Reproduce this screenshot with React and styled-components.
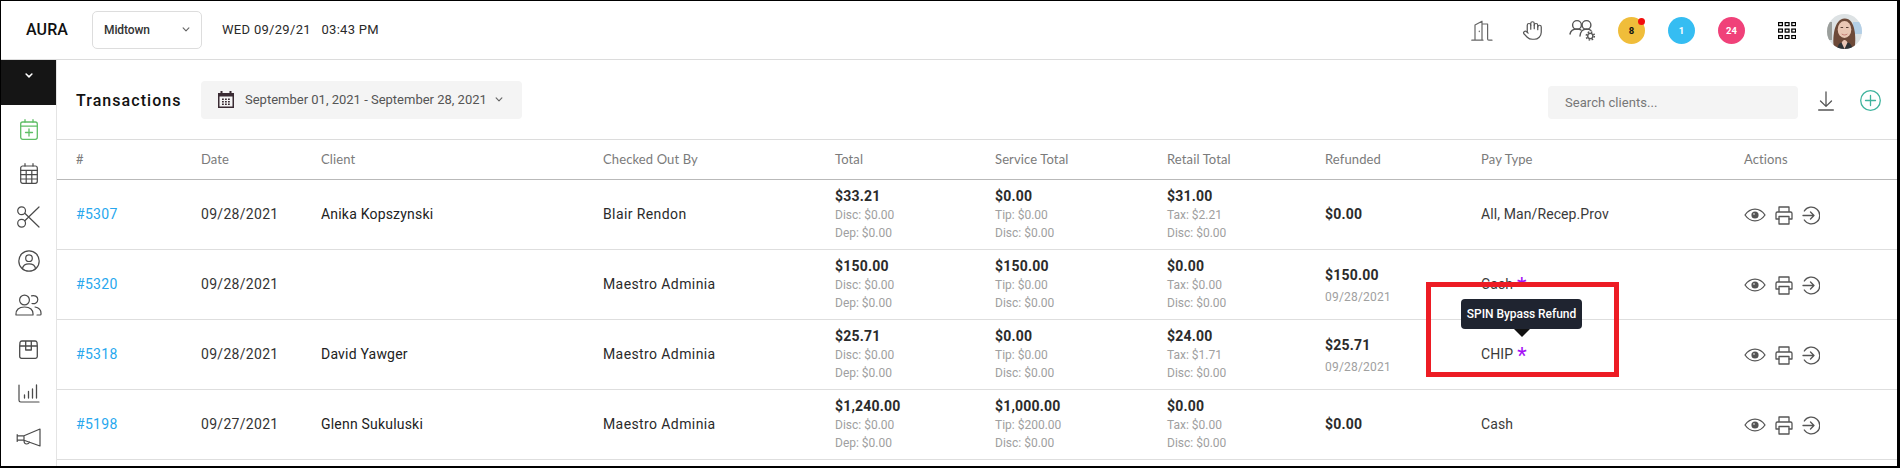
import React from "react";
import styled, { createGlobalStyle } from "styled-components";
import { Hand } from "lucide-react";

const Global = createGlobalStyle`
  html, body { margin: 0; padding: 0; background: #000; }
  body { font-family: Roboto, "Liberation Sans", sans-serif; }
  * { box-sizing: border-box; }
`;

const Frame = styled.div`
  width: 1900px; height: 468px; background: #fff; overflow: hidden;
  border-style: solid; border-color: #000; border-width: 1px 3px 2px 1px;
  display: flex; flex-direction: column;
`;
const TopBar = styled.header`
  height: 59px; flex: none; display: flex; align-items: center;
  border-bottom: 1px solid #dcdcdc; padding-left: 25px; padding-right: 35px;
`;
const Brand = styled.div`font-size: 16px; font-weight: 500; color: #111; width: 66px; letter-spacing: .1px; margin-top: -1px;`;
const LocationSelect = styled.div`
  width: 110px; height: 38px; border: 1px solid #ddd; border-radius: 5px; margin-top: -1px;
  display: flex; align-items: center; justify-content: space-between;
  padding: 0 11px 0 11px; font-size: 12px; color: #333; font-weight: 500; margin-right: 20px; letter-spacing: -.1px;
`;
const Clock = styled.div`font-size: 13px; color: #2a2a2a; letter-spacing: .3px; white-space: pre; margin-top: -1px; font-weight: 400;`;
const TopRight = styled.div`margin-left: auto; display: flex; align-items: center;`;
const Slot = styled.div`width: ${p => p.$w || 50}px; display: flex; justify-content: center; align-items: center; position: relative;`;
const Badge = styled.div`
  width: 27px; height: 27px; border-radius: 50%; background: ${p => p.$bg}; color: ${p => p.$fg};
  display: flex; align-items: center; justify-content: center; font-size: 9.5px; font-weight: 700; position: relative;
  margin-left: -1px;
`;
const Dot = styled.span`position: absolute; width: 7px; height: 7px; border-radius: 50%; background: #f20d0d; top: 1px; right: 0px;`;
const Avatar = styled.div`width: 35px; height: 35px; border-radius: 50%; overflow: hidden; margin-left: 10px; margin-top: 2px;`;

const Body = styled.div`flex: 1; display: flex; min-height: 0;`;
const Sidebar = styled.aside`width: 56px; flex: none; border-right: 1px solid #e4e4e4; display: flex; flex-direction: column; align-items: stretch;`;
const Toggle = styled.div`
  height: 45px; background: #151515; display: flex; justify-content: center; padding-top: 13px;
`;
const NavList = styled.nav`padding-top: 2px; display: flex; flex-direction: column;`;
const NavItem = styled.div`height: 44px; display: flex; align-items: center; justify-content: center;`;

const Main = styled.main`flex: 1; min-width: 0; display: flex; flex-direction: column;`;
const Toolbar = styled.div`
  height: 80px; flex: none; border-bottom: 1px solid #dcdcdc; display: flex; align-items: center;
  padding: 0 16px 0 19px;
`;
const Title = styled.h1`margin: 1px 21px 0 0; width: 104px; font-size: 16px; font-weight: 500; letter-spacing: 1.05px; color: #111; white-space: nowrap;`;
const DateRange = styled.div`
  width: 321px; height: 38px; border-radius: 4px; background: #f4f4f4; display: flex; align-items: center;
  padding-left: 17px; font-size: 13px; color: #555; white-space: nowrap;
`;
const DateText = styled.span`margin: 0 8px 0 11px; letter-spacing: 0;`;
const Search = styled.div`
  margin-left: auto; width: 250px; height: 33px; border-radius: 4px; background: #f4f4f4; margin-top: 6px;
  display: flex; align-items: center; padding-left: 17px; font-size: 13px; color: #777; letter-spacing: .05px;
`;
const ToolIcon = styled.div`display: flex; align-items: center; justify-content: center; margin-left: ${p => p.$ml}px; margin-top: ${p => p.$mt}px;`;

const cols = "125px 120px 282px 232px 160px 172px 158px 156px 263px 1fr";
const Head = styled.div`
  height: 40px; flex: none; display: grid; grid-template-columns: ${cols}; align-items: center;
  padding: 0 0 2px 19px; border-bottom: 1px solid #b9b9b9;
  font-family: Lato, sans-serif; font-size: 13px; color: #7b7b7b; letter-spacing: .12px;
`;
const Row = styled.div`
  height: 70px; flex: none; display: grid; grid-template-columns: ${cols}; align-items: center;
  padding: 0 0 2px 19px; border-bottom: 1px solid #dedede; font-size: 14px; color: #2f2f2f; letter-spacing: .2px;
`;
const IdLink = styled.a`color: #27a7ee; letter-spacing: .3px;`;
const DateCell = styled.span`color: #333; letter-spacing: .3px;`;
const Name = styled.span`color: #222;`;
const ByName = styled.span`color: #2a2a2a; letter-spacing: .4px;`;
const MoneyCell = styled.div`display: flex; flex-direction: column; margin-top: 1px;`;
const RefundCell = styled.div`display: flex; flex-direction: column; margin-top: ${p => (p.$dated ? 4 : 1)}px;`;
const Amount = styled.div`font-size: 14px; font-weight: 700; color: #2b2b2b; line-height: 19px; letter-spacing: .2px;`;
const Sub = styled.div`font-size: 12px; color: #a0a0a0; line-height: 18px; letter-spacing: 0; &:first-of-type{margin-top:1px;}`;
const RefundDate = styled.div`font-size: 12px; color: #a0a0a0; line-height: 18px; margin-top: 3px; letter-spacing: .2px;`;
const PayCell = styled.div`position: relative; align-self: stretch; display: flex; align-items: center; letter-spacing: .1px; color: #3a3a3a;`;
const Star = styled.span`color: #a512f5; margin-left: 4px; font-size: 22px; line-height: 14px; position: relative; top: 2px;`;
const Tooltip = styled.div`
  position: absolute; left: -20px; top: -21px; width: 121px; height: 30px; background: #1f2430; border-radius: 4px;
  color: #fff; font-size: 12px; font-weight: 500; display: flex; align-items: center; justify-content: center;
  white-space: nowrap; letter-spacing: -.05px; z-index: 2;
  &::after {
    content: ""; position: absolute; left: 53px; top: 30px; border-style: solid; border-width: 8px 8px 0 8px;
    border-color: #111 transparent transparent transparent;
  }
`;
const Highlight = styled.div`position: absolute; left: -55px; top: -38px; width: 193px; height: 95px; border: 5px solid #ed1c24; z-index: 3;`;
const Actions = styled.div`display: flex; align-items: center; margin-top: 3px; gap: 9px;`;

const S = ({ w = 24, h = 24, vb, c = "#555", sw = 1.4, children }) => (
  <svg width={w} height={h} viewBox={vb || `0 0 ${w} ${h}`} fill="none" stroke={c} strokeWidth={sw} strokeLinecap="round" strokeLinejoin="round">{children}</svg>
);
const Chev = ({ c = "#555", w = 1.2, size = 8 }) => (
  <svg width={size} height={size * .6} viewBox="0 0 8 5" fill="none" stroke={c} strokeWidth={w} strokeLinecap="round" strokeLinejoin="round"><path d="M1 1l3 3 3-3" /></svg>
);

const Door = () => <S w={22} h={21} c="#666" sw={1.2}><path d="M4 20V5L11 1.2V20M0.8 20.2H12M11 4H16.6V19c0 .9.4 1.2 1.2 1.2H21" /><path d="M8.3 11v.6" /></S>;
const PeopleGear = () => (
  <S w={27} h={22}>
    <circle cx="8" cy="6" r="4.4" /><path d="M1 15c.6-3.3 3-5 7-5 1.6 0 3 .3 4 1" />
    <circle cx="17.5" cy="6" r="4.4" /><path d="M11 17c.3-4 2.8-7 6.5-7 2 0 3.4.6 4.5 1.6" />
    <circle cx="21.3" cy="17" r="2.6" /><circle cx="21.3" cy="17" r="4" strokeWidth="1.6" strokeDasharray="1.6 1.55" strokeLinecap="butt" />
  </S>
);
const Apps = () => (
  <svg width="18" height="17" viewBox="0 0 18 17" fill="none" stroke="#000" strokeWidth="1.25">
    {[0, 6.5, 13].map(y => [0, 6.6, 13.2].map(x => <rect key={x + "-" + y} x={x + .6} y={y + .6} width="3.8" height="3" />))}
  </svg>
);
const CalendarPlus = () => <S c="#5fbe66" w={18} h={21} sw={1.3}><rect x=".7" y="3" width="16.6" height="17.3" rx="2" /><path d="M.7 7.2h16.6M5 .7v2.3M13 .7v2.3M9 10v7M5.5 13.5h7" strokeWidth="1.3" /></S>;
const CalendarGrid = () => <S c="#4a4a4a" w={18} h={21} sw={1.2}><rect x=".7" y="3" width="16.6" height="17.3" rx="2" /><path d="M.7 7.4h16.6M.7 11.6h16.6M.7 16h16.6M6.2 7.4v12.9M11.8 7.4v12.9M5 .7v2.3M13 .7v2.3" /></S>;
const Scissors = () => <S c="#4a4a4a" w={23} h={22} sw={1.2}><circle cx="4.6" cy="4.8" r="3.9" /><circle cx="4.6" cy="17.2" r="3.9" /><path d="M7.8 7.2L22 21M7.8 14.8L22 1" /></S>;
const UserCircle = () => <S c="#4a4a4a" w={22} h={22} sw={1.2}><circle cx="11" cy="11" r="10.2" /><circle cx="11" cy="8.2" r="3.3" /><path d="M4.4 18.6c.6-3.4 3-4.8 6.6-4.8s6 1.4 6.6 4.8" /></S>;
const Group = () => <S c="#4a4a4a" w={27} h={22} sw={1.2}><circle cx="9.5" cy="6" r="4.9" /><path d="M1 21c-.4-5.5 3-8 8.5-8s9 2.5 8.500 8zM16.500 1.800c3-.8 6.300.5 6.300 3.700 0 3-3 4.800-5.800 4M20 13c3.300.5 6.300 2.800 6 7.200 0 .6-.4.800-1 .800h-3" /></S>;
const Box = () => <S c="#4a4a4a" w={19} h={19} sw={1.3}><path d="M2.800 1h13.400c1 0 1.500.5 1.800 1.400L18.300 6v10.500c0 1.300-.8 1.800-1.800 1.800H2.500c-1 0-1.800-.5-1.800-1.800V6L1 2.400C1.300 1.500 1.800 1 2.800 1zM.7 6h17.600M6.700 1v9h5.600V1" /></S>;
const Chart = () => <S c="#4a4a4a" w={22} h={19} sw={1.2}><path d="M1 1v15.300c0 1 .6 1.700 1.700 1.700H21" /><path d="M6.500 14v-3M10.500 14V7.500M14.500 14V5M18.500 14V1" strokeWidth="1.3" /></S>;
const Megaphone = () => <S c="#4a4a4a" w={25} h={19} sw={1.2}><path d="M24 1L8 7.700v4.600L24 18zM8 7.800H1.200v4.400H8M1.200 6.500v7M8 12.500c0 1.800.7 3.500 2.600 3.500 1.700 0 2.600-1 2.700-2.200" /></S>;

const Eye = () => <S w={22} h={14} sw={1.3}><path d="M1 7c2.600-3.800 6-5.800 10-5.800S18.400 3.200 21 7c-2.600 3.800-6 5.800-10 5.800S3.600 10.800 1 7z" /><circle cx="11" cy="7" r="3.600" fill="#555" stroke="none" /><circle cx="10" cy="6" r=".8" fill="#fff" stroke="none" /></S>;
const Printer = () => <S w={18} h={19} sw={1.3}><path d="M4 6V1h10v5M4 13H1V7.400C1 6.600 1.600 6 2.400 6h13.200c.8 0 1.400.6 1.400 1.400V13h-3" /><rect x="4" y="10.500" width="10" height="7.500" /></S>;
const Enter = () => <S w={18} h={19} sw={1.3}><path d="M2.300 5A8.400 8.400 0 1 1 2.300 14M1 9.500h11M8.500 6l3.500 3.500L8.500 13" /></S>;
const Download = () => <S c="#555" w={16} h={20} sw={1.3}><path d="M8 1v14M2.500 10L8 15.400 13.500 10" /><path d="M.7 19h14.600" strokeWidth="1.500" /></S>;
const PlusCircle = () => <S c="#3fb39d" w={21} h={21} sw={1.300}><circle cx="10.500" cy="10.500" r="9.800" /><path d="M10.500 5.500v10M5.500 10.500h10" /></S>;
const CalSolid = () => (
  <svg width="16" height="17" viewBox="0 0 16 17"><path d="M0 2h2.500V0h2v2h7V0h2v2H16v15H0z" fill="#3a2b33" /><rect x="1.500" y="5.500" width="13" height="10" fill="#f4f4f4" />
    {[7.500, 10, 12.500].map(y => [4, 7, 10].map(x => <rect key={x + "," + y} x={x} y={y} width="1.800" height="1.500" fill="#3a2b33" />))}
  </svg>
);
const Portrait = () => (
  <svg width="35" height="35" viewBox="0 0 35 35">
    <defs><filter id="b"><feGaussianBlur stdDeviation=".6" /></filter></defs>
    <rect width="35" height="35" fill="#dde2e4" />
    <rect x="26" y="8" width="9" height="12" fill="#b3cfe6" filter="url(#b)" />
    <rect x="0" y="8" width="5" height="18" fill="#9b9f9c" filter="url(#b)" />
    <g filter="url(#b)">
      <path d="M7 35C5 24 7 5 17.500 4.500c10.500-.5 12 18 10 30.500z" fill="#6d4a38" />
      <ellipse cx="17.500" cy="15.500" rx="6.800" ry="8.500" fill="#eac7b4" />
      <path d="M13 35c1-7 3-9 4.500-9s4 2 5 9z" fill="#e9c6b6" />
      <path d="M10 35c1-4 2.500-6.500 4.500-6.500l3 6.500 3-6.500c2 0 4.500 2.500 5 6.500z" fill="#2d3035" />
      <path d="M14.700 20c1.900 1.300 4 1.300 5.700 0" stroke="#c0746c" strokeWidth=".9" fill="none" />
      <path d="M13.600 13.500h2.500M19 13.500h2.500" stroke="#4a3026" strokeWidth=".9" />
    </g>
  </svg>
);

const rows = [
  { id: "#5307", date: "09/28/2021", client: "Anika Kopszynski", by: "Blair Rendon",
    total: ["$33.21", "Disc: $0.00", "Dep: $0.00"], service: ["$0.00", "Tip: $0.00", "Disc: $0.00"], retail: ["$31.00", "Tax: $2.21", "Disc: $0.00"],
    refund: "$0.00", pay: "All, Man/Recep.Prov" },
  { id: "#5320", date: "09/28/2021", client: "", by: "Maestro Adminia",
    total: ["$150.00", "Disc: $0.00", "Dep: $0.00"], service: ["$150.00", "Tip: $0.00", "Disc: $0.00"], retail: ["$0.00", "Tax: $0.00", "Disc: $0.00"],
    refund: "$150.00", refundDate: "09/28/2021", pay: "Cash", star: true },
  { id: "#5318", date: "09/28/2021", client: "David Yawger", by: "Maestro Adminia",
    total: ["$25.71", "Disc: $0.00", "Dep: $0.00"], service: ["$0.00", "Tip: $0.00", "Disc: $0.00"], retail: ["$24.00", "Tax: $1.71", "Disc: $0.00"],
    refund: "$25.71", refundDate: "09/28/2021", pay: "CHIP", star: true, note: true },
  { id: "#5198", date: "09/27/2021", client: "Glenn Sukuluski", by: "Maestro Adminia",
    total: ["$1,240.00", "Disc: $0.00", "Dep: $0.00"], service: ["$1,000.00", "Tip: $200.00", "Disc: $0.00"], retail: ["$0.00", "Tax: $0.00", "Disc: $0.00"],
    refund: "$0.00", pay: "Cash" },
];

const Money = ({ v }) => (
  <MoneyCell><Amount>{v[0]}</Amount><Sub>{v[1]}</Sub><Sub>{v[2]}</Sub></MoneyCell>
);

export default function App() {
  return (
    <Frame>
      <Global />
      <TopBar>
        <Brand>AURA</Brand>
        <LocationSelect>Midtown <Chev c="#666" /></LocationSelect>
        <Clock>WED 09/29/21   03:43 PM</Clock>
        <TopRight>
          <Slot><Door /></Slot>
          <Slot><Hand size={21} strokeWidth={1.4} color="#555" /></Slot>
          <Slot><PeopleGear /></Slot>
          <Slot><Badge $bg="#f0bd3a" $fg="#111">8<Dot /></Badge></Slot>
          <Slot><Badge $bg="#35bdf2" $fg="#fff">1</Badge></Slot>
          <Slot><Badge $bg="#f04179" $fg="#fff">24</Badge></Slot>
          <Slot $w={60}><Apps /></Slot>
          <Avatar><Portrait /></Avatar>
        </TopRight>
      </TopBar>
      <Body>
        <Sidebar>
          <Toggle><Chev c="#fff" w={1.6} size={8} /></Toggle>
          <NavList>
            <NavItem><CalendarPlus /></NavItem>
            <NavItem><CalendarGrid /></NavItem>
            <NavItem><Scissors /></NavItem>
            <NavItem><UserCircle /></NavItem>
            <NavItem><Group /></NavItem>
            <NavItem><Box /></NavItem>
            <NavItem><Chart /></NavItem>
            <NavItem><Megaphone /></NavItem>
          </NavList>
        </Sidebar>
        <Main>
          <Toolbar>
            <Title>Transactions</Title>
            <DateRange>
              <CalSolid />
              <DateText>September 01, 2021 - September 28, 2021</DateText>
              <Chev c="#666" />
            </DateRange>
            <Search>Search clients...</Search>
            <ToolIcon $ml={20} $mt={3}><Download /></ToolIcon>
            <ToolIcon $ml={26} $mt={2}><PlusCircle /></ToolIcon>
          </Toolbar>
          <Head>
            <div>#</div><div>Date</div><div>Client</div><div>Checked Out By</div><div>Total</div>
            <div>Service Total</div><div>Retail Total</div><div>Refunded</div><div>Pay Type</div><div>Actions</div>
          </Head>
          {rows.map(r => (
            <Row key={r.id}>
              <IdLink>{r.id}</IdLink>
              <DateCell>{r.date}</DateCell>
              <Name>{r.client}</Name>
              <ByName>{r.by}</ByName>
              <Money v={r.total} />
              <Money v={r.service} />
              <Money v={r.retail} />
              <RefundCell $dated={!!r.refundDate}>
                <Amount>{r.refund}</Amount>
                {r.refundDate && <RefundDate>{r.refundDate}</RefundDate>}
              </RefundCell>
              <PayCell>
                {r.pay}{r.star && <Star>*</Star>}
                {r.note && <Tooltip>SPIN Bypass Refund</Tooltip>}
                {r.note && <Highlight />}
              </PayCell>
              <Actions><Eye /><Printer /><Enter /></Actions>
            </Row>
          ))}
        </Main>
      </Body>
    </Frame>
  );
}
